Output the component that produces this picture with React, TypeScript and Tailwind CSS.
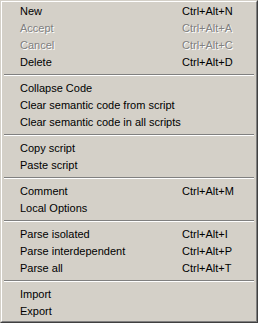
type Item = { label: string; shortcut?: string; disabled?: boolean } | "sep";

const items: Item[] = [
  { label: "New", shortcut: "Ctrl+Alt+N" },
  { label: "Accept", shortcut: "Ctrl+Alt+A", disabled: true },
  { label: "Cancel", shortcut: "Ctrl+Alt+C", disabled: true },
  { label: "Delete", shortcut: "Ctrl+Alt+D" },
  "sep",
  { label: "Collapse Code" },
  { label: "Clear semantic code from script" },
  { label: "Clear semantic code in all scripts" },
  "sep",
  { label: "Copy script" },
  { label: "Paste script" },
  "sep",
  { label: "Comment", shortcut: "Ctrl+Alt+M" },
  { label: "Local Options" },
  "sep",
  { label: "Parse isolated", shortcut: "Ctrl+Alt+I" },
  { label: "Parse interdependent", shortcut: "Ctrl+Alt+P" },
  { label: "Parse all", shortcut: "Ctrl+Alt+T" },
  "sep",
  { label: "Import" },
  { label: "Export" },
];

export default function App() {
  return (
    <div className="w-[258px] h-[323px] bg-[#d4d0c8] font-['Liberation_Sans',Arial,sans-serif] text-[11px] text-black">
      {/* win2000 outset border */}
      <div className="h-full border border-t-[#d4d0c8] border-l-[#d4d0c8] border-r-[#404040] border-b-[#404040]">
        <div className="h-full border border-t-white border-l-white border-r-[#808080] border-b-[#808080] p-px">
          {items.map((item, i) =>
            item === "sep" ? (
              <div key={i} className="h-[9px] pt-[3px] px-px">
                <div className="border-t border-t-[#808080] border-b border-b-white" />
              </div>
            ) : (
              <div
                key={i}
                className={
                  "h-[17px] flex items-center pl-[17px] pr-[17px] leading-none " +
                  (item.disabled ? "text-[#808080] [text-shadow:1px_1px_0_#ffffff]" : "")
                }
              >
                <span className="flex-1">{item.label}</span>
                {item.shortcut && <span className="w-[56px]">{item.shortcut}</span>}
              </div>
            )
          )}
        </div>
      </div>
    </div>
  );
}
